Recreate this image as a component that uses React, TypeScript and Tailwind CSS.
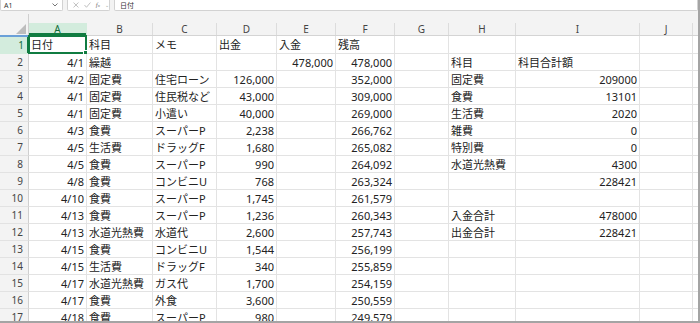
import React from 'react';

// column widths in px, including the right gridline
const COLS = [
  { key: 'A', w: 58 },
  { key: 'B', w: 66 },
  { key: 'C', w: 64 },
  { key: 'D', w: 60 },
  { key: 'E', w: 59 },
  { key: 'F', w: 59 },
  { key: 'G', w: 54 },
  { key: 'H', w: 67 },
  { key: 'I', w: 124 },
  { key: 'J', w: 53 },
];

type Cell = { v: string; r?: boolean };
const L = (v: string): Cell => ({ v });
const R = (v: string): Cell => ({ v, r: true });
const E: Cell = { v: '' };

const ROWS: Cell[][] = [
  [L('日付'), L('科目'), L('メモ'), L('出金'), L('入金'), L('残高'), E, E, E, E],
  [R('4/1'), L('繰越'), E, E, R('478,000'), R('478,000'), E, L('科目'), L('科目合計額'), E],
  [R('4/2'), L('固定費'), L('住宅ローン'), R('126,000'), E, R('352,000'), E, L('固定費'), R('209000'), E],
  [R('4/1'), L('固定費'), L('住民税など'), R('43,000'), E, R('309,000'), E, L('食費'), R('13101'), E],
  [R('4/1'), L('固定費'), L('小遣い'), R('40,000'), E, R('269,000'), E, L('生活費'), R('2020'), E],
  [R('4/3'), L('食費'), L('スーパーP'), R('2,238'), E, R('266,762'), E, L('雑費'), R('0'), E],
  [R('4/5'), L('生活費'), L('ドラッグF'), R('1,680'), E, R('265,082'), E, L('特別費'), R('0'), E],
  [R('4/5'), L('食費'), L('スーパーP'), R('990'), E, R('264,092'), E, L('水道光熱費'), R('4300'), E],
  [R('4/8'), L('食費'), L('コンビニU'), R('768'), E, R('263,324'), E, E, R('228421'), E],
  [R('4/10'), L('食費'), L('スーパーP'), R('1,745'), E, R('261,579'), E, E, E, E],
  [R('4/13'), L('食費'), L('スーパーP'), R('1,236'), E, R('260,343'), E, L('入金合計'), R('478000'), E],
  [R('4/13'), L('水道光熱費'), L('水道代'), R('2,600'), E, R('257,743'), E, L('出金合計'), R('228421'), E],
  [R('4/15'), L('食費'), L('コンビニU'), R('1,544'), E, R('256,199'), E, E, E, E],
  [R('4/15'), L('生活費'), L('ドラッグF'), R('340'), E, R('255,859'), E, E, E, E],
  [R('4/17'), L('水道光熱費'), L('ガス代'), R('1,700'), E, R('254,159'), E, E, E, E],
  [R('4/17'), L('食費'), L('外食'), R('3,600'), E, R('250,559'), E, E, E, E],
  [R('4/18'), L('食費'), L('スーパーP'), R('980'), E, R('249,579'), E, E, E, E],
];

export default function App() {
  return (
    <div
      className="w-[700px] h-[323px] overflow-hidden bg-[#f3f3f3] border-r-2 border-b-2 border-[#a4a4a4] flex flex-col text-[#222]"
      style={{ fontFamily: '"Noto Sans", "Noto Sans CJK JP", sans-serif' }}
    >
      {/* ── Formula bar ─────────────────────────── */}
      <div className="h-[12px] flex items-start shrink-0">
        <div className="w-[63px] h-[11px] bg-white border border-t-0 border-[#d2d2d2] rounded-b-[2px] flex items-center justify-between px-[3px]">
          <span className="text-[7px] leading-none text-[#333]">A1</span>
          <svg width="6" height="4" viewBox="0 0 6 4" className="mr-[1px]">
            <path d="M0.5 0.5 L3 3 L5.5 0.5" fill="none" stroke="#666" strokeWidth="0.9" />
          </svg>
        </div>
        <div className="ml-[4px] w-[43px] h-[11px] bg-white border border-t-0 border-[#d2d2d2] rounded-b-[2px] flex items-center gap-[5px] pl-[5px]">
          <svg width="6" height="6" viewBox="0 0 6 6">
            <path d="M0.5 0.5 L5.5 5.5 M5.5 0.5 L0.5 5.5" stroke="#b0b0b0" strokeWidth="0.8" />
          </svg>
          <svg width="7" height="6" viewBox="0 0 7 6">
            <path d="M0.5 3 L2.5 5.3 L6.5 0.5" fill="none" stroke="#b0b0b0" strokeWidth="0.8" />
          </svg>
          <span className="text-[7px] leading-none italic text-[#777]" style={{ fontFamily: '"Liberation Serif", serif' }}>f<span className="text-[5px]">x</span></span>
          <span className="text-[5px] leading-none text-[#999]">⌄</span>
        </div>
        <div className="ml-[4px] flex-1 h-[11px] bg-white border border-t-0 border-[#d2d2d2] rounded-b-[2px] flex items-center pl-[5px]">
          <span className="text-[7px] leading-none text-[#333]">日付</span>
        </div>
      </div>

      {/* gap above headers */}
      <div className="h-[11px] shrink-0 flex">
        <div className="w-[29px] flex flex-col justify-end">
          <div className="ml-auto w-[1px] h-[9px] bg-[#cfcfcf]" />
        </div>
      </div>

      {/* ── Column headers ─────────────────────── */}
      <div className="h-[13px] shrink-0 flex border-b border-[#d4d4d4]">
        <div className="w-[29px] shrink-0 border-r border-[#cfcfcf] relative flex items-end justify-end pr-[2px] pb-[1px]">
          <svg width="10" height="10" viewBox="0 0 10 10">
            <path d="M10 0 L10 10 L0 10 Z" fill="#bdbdbd" />
          </svg>
          <div className="absolute left-0 right-0 -bottom-[2px] h-[2px] bg-[#6aa0d8]" />
        </div>
        {COLS.map((c) => (
          <div
            key={c.key}
            style={{ width: c.w }}
            className={`shrink-0 flex items-center justify-center text-[10px] leading-none border-r ${
              c.key === 'A'
                ? 'bg-[#d3ecdd] text-[#0f6b36] border-[#d3ecdd] shadow-[inset_0_-2px_0_#107c41]'
                : 'text-[#444] border-[#dcdcdc]'
            }`}
          >
            {c.key}
          </div>
        ))}
        <div className="flex-1" />
      </div>

      {/* ── Rows ───────────────────────────────── */}
      <div className="flex-1 flex flex-col bg-white">
        {ROWS.map((row, ri) => {
          const first = ri === 0;
          return (
            <div key={ri} className={`flex shrink-0 ${first ? 'h-[18px]' : 'h-[17px]'}`}>
              <div
                className={`w-[29px] shrink-0 flex items-center justify-end pr-[5px] text-[10px] leading-none border-b ${
                  first
                    ? 'bg-[#d3ecdd] text-[#0f6b36] border-[#d3ecdd] shadow-[inset_-2px_0_0_#107c41]'
                    : 'bg-[#f3f3f3] text-[#444] border-[#e2e2e2] border-r border-r-[#cfcfcf]'
                }`}
              >
                {ri + 1}
              </div>
              {COLS.map((c, ci) => {
                const cell = row[ci];
                return (
                  <div
                    key={c.key}
                    style={{ width: c.w }}
                    className={`shrink-0 relative flex items-center border-r border-b border-[#e3e3e3] text-[11px] leading-none whitespace-nowrap ${
                      cell.r ? 'justify-end pr-[2px]' : 'justify-start pl-[2px]'
                    }`}
                  >
                    {cell.v}
                    {first && ci === 0 && (
                      <div className="absolute -left-[1px] -top-[1px] -right-[1px] -bottom-[1px] border-2 border-[#107c41]">
                        <div className="absolute -right-[3px] -bottom-[3px] w-[5px] h-[5px] bg-[#107c41] border border-white" />
                      </div>
                    )}
                  </div>
                );
              })}
              <div className="flex-1 border-b border-[#e3e3e3]" />
            </div>
          );
        })}
      </div>
    </div>
  );
}
